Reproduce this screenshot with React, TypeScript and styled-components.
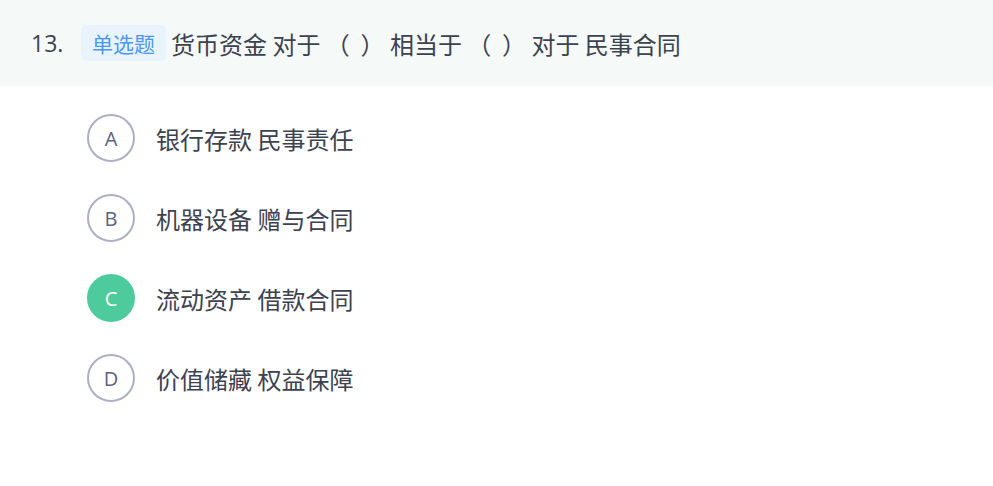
import styled, { createGlobalStyle } from 'styled-components'

const GlobalStyle = createGlobalStyle`
  html, body {
    margin: 0;
    padding: 0;
    background: #ffffff;
    font-family: "Noto Sans CJK SC", "Noto Sans", sans-serif;
  }
`

const Page = styled.div`
  width: 993px;
  height: 486px;
  background: #ffffff;
`

const Header = styled.div`
  height: 86px;
  background: #f5f9f8;
  display: flex;
  align-items: center;
  padding-left: 31px;
  color: #3c4250;
  font-size: 24px;
`

const Number = styled.span`
  width: 50px;
  font-family: "Open Sans", "Noto Sans", sans-serif;
  font-size: 23px;
`

const Tag = styled.span`
  display: inline-flex;
  align-items: center;
  justify-content: center;
  height: 36px;
  padding: 0 11px;
  margin-right: 5px;
  border-radius: 5px;
  background: #e9f3fc;
  color: #4a98f2;
  font-size: 21px;
`

const Stem = styled.span`
  white-space: pre;
`

const Options = styled.div`
  display: flex;
  flex-direction: column;
  padding: 28px 0 0 87px;
  gap: 32px;
`

const Option = styled.div`
  display: flex;
  align-items: center;
  gap: 21px;
  height: 48px;
`

const Circle = styled.div<{ $selected?: boolean }>`
  width: 48px;
  height: 48px;
  box-sizing: border-box;
  border-radius: 50%;
  border: 2px solid ${p => (p.$selected ? '#4ecb9c' : '#aeafc6')};
  background: ${p => (p.$selected ? '#4ecb9c' : '#ffffff')};
  color: ${p => (p.$selected ? '#ffffff' : '#5b6283')};
  display: flex;
  align-items: center;
  justify-content: center;
  font-family: "Open Sans", "Noto Sans", sans-serif;
  font-size: 20px;
`

const Label = styled.span`
  font-size: 24px;
  color: #3c4250;
`

const options = [
  { key: 'A', text: '银行存款 民事责任' },
  { key: 'B', text: '机器设备 赠与合同' },
  { key: 'C', text: '流动资产 借款合同', selected: true },
  { key: 'D', text: '价值储藏 权益保障' },
]

export default function App() {
  return (
    <Page>
      <GlobalStyle />
      <Header>
        <Number>13.</Number>
        <Tag>单选题</Tag>
        <Stem>货币资金 对于 （  ） 相当于 （  ） 对于 民事合同</Stem>
      </Header>
      <Options>
        {options.map(o => (
          <Option key={o.key}>
            <Circle $selected={o.selected}>{o.key}</Circle>
            <Label>{o.text}</Label>
          </Option>
        ))}
      </Options>
    </Page>
  )
}
